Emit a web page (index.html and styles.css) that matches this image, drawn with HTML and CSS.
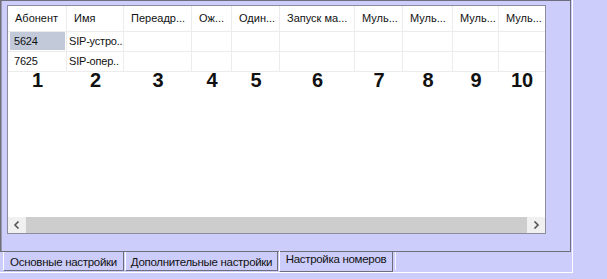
FILE: index.html
```
<!DOCTYPE html>
<html lang="ru">
<head>
    <meta charset="UTF-8">
    <title>Настройка номеров</title>
    <link rel="stylesheet" href="styles.css">
</head>
<body>
    <div class="frame">
        <div class="panel">
            <div class="list">
                <div class="row head">
                    <div class="cell">Абонент</div>
                    <div class="cell">Имя</div>
                    <div class="cell">Переадр...</div>
                    <div class="cell">Ож...</div>
                    <div class="cell">Один...</div>
                    <div class="cell">Запуск ма...</div>
                    <div class="cell">Муль...</div>
                    <div class="cell">Муль...</div>
                    <div class="cell">Муль...</div>
                    <div class="cell last">Муль...</div>
                </div>
                <div class="row item">
                    <div class="cell"><span class="sel">5624</span></div>
                    <div class="cell">SIP-устро..</div>
                    <div class="cell"></div>
                    <div class="cell"></div>
                    <div class="cell"></div>
                    <div class="cell"></div>
                    <div class="cell"></div>
                    <div class="cell"></div>
                    <div class="cell"></div>
                    <div class="cell last"></div>
                </div>
                <div class="row item">
                    <div class="cell"><span class="plain">7625</span></div>
                    <div class="cell">SIP-опер..</div>
                    <div class="cell"></div>
                    <div class="cell"></div>
                    <div class="cell"></div>
                    <div class="cell"></div>
                    <div class="cell"></div>
                    <div class="cell"></div>
                    <div class="cell"></div>
                    <div class="cell last"></div>
                </div>
                <div class="row nums">
                    <div>1</div>
                    <div>2</div>
                    <div>3</div>
                    <div>4</div>
                    <div>5</div>
                    <div>6</div>
                    <div>7</div>
                    <div>8</div>
                    <div>9</div>
                    <div>10</div>
                </div>
                <div class="spacer"></div>
                <div class="hscroll">
                    <div class="arrow">
                        <svg width="8" height="8" viewBox="0 0 8 8"><path d="M5.5 0.5 L2 4 L5.5 7.5" fill="none" stroke="#555" stroke-width="1.6"/></svg>
                    </div>
                    <div class="thumb"></div>
                    <div class="arrow">
                        <svg width="8" height="8" viewBox="0 0 8 8"><path d="M2.5 0.5 L6 4 L2.5 7.5" fill="none" stroke="#555" stroke-width="1.6"/></svg>
                    </div>
                </div>
            </div>
        </div>
        <div class="tabs">
            <div class="tab t1">Основные настройки</div>
            <div class="tab t2">Дополнительные настройки</div>
            <div class="tab t3 active">Настройка номеров</div>
            <div class="tab-rest"></div>
        </div>
    </div>
</body>
</html>
```

FILE: styles.css
```
body {
    margin: 0;
    padding: 0;
    background: #cdcdfb;
    font-family: 'Liberation Sans', Arial, sans-serif;
    width: 607px;
    height: 279px;
    overflow: hidden;
}
.frame {
    box-sizing: border-box;
    width: 573px;
    height: 273px;
    border-right: 1px solid #ffffff;
    border-bottom: 1px solid #ffffff;
    display: flex;
    flex-direction: column;
}
.panel {
    box-sizing: border-box;
    width: 571px;
    height: 252px;
    border: 1px solid #6f6f7c;
    box-shadow: inset 1px 0 #9a9aae;
    padding: 4px 0 0 6px;
}
.list {
    box-sizing: border-box;
    width: 539px;
    height: 229px;
    border: 1px solid #8c8c9c;
    background: #fff;
    display: flex;
    flex-direction: column;
}
.row {
    display: grid;
    grid-template-columns: 59px 57px 68px 40px 48px 75px 48px 50px 46px 46px;
}
.cell {
    box-sizing: border-box;
    border-right: 1px solid #ececec;
    font-size: 11px;
    color: #111;
    white-space: nowrap;
    overflow: hidden;
}
.cell.last {
    border-right: none;
}
.head {
    height: 25px;
    border-bottom: 1px solid #ececec;
}
.head .cell {
    line-height: 25px;
    padding-left: 7px;
}
.item {
    height: 19px;
    border-bottom: 1px solid #ececec;
}
.item .cell {
    line-height: 18px;
    padding-left: 2px;
    letter-spacing: -0.2px;
}
.item .cell:first-child {
    padding-left: 2px;
    padding-right: 1px;
}
.sel,
.plain {
    display: block;
    height: 18px;
    padding-left: 4px;
}
.sel {
    background: #c2cada;
}
.nums div {
    text-align: center;
    font-weight: bold;
    font-size: 20px;
    line-height: 20px;
    margin-top: -2px;
    color: #111;
}
.spacer {
    flex: 1;
}
.hscroll {
    height: 16px;
    display: flex;
    background: #f0f0f0;
}
.arrow {
    width: 18px;
    display: flex;
    align-items: center;
    justify-content: center;
}
.thumb {
    flex: 1;
    background: #cdcdcd;
}
.tabs {
    display: flex;
    height: 20px;
    padding-left: 3px;
    align-items: flex-start;
}
.tab {
    box-sizing: border-box;
    height: 19px;
    border-left: 1px solid #ffffff;
    border-right: 1px solid #6f6f7c;
    border-bottom: 1px solid #6f6f7c;
    font-size: 11.5px;
    line-height: 18px;
    padding-top: 1px;
    margin-right: 1px;
    color: #111;
    white-space: nowrap;
    text-align: center;
    letter-spacing: -0.3px;
}
.t1 {
    width: 121px;
}
.t2 {
    width: 153px;
}
.t3 {
    width: 114px;
}
.tab.active {
    height: 21px;
    margin-top: -1px;
    padding-top: 0;
    line-height: 16px;
}
.tab-rest {
    flex: 1;
    height: 18px;
    border-left: 1px solid #f4f4ff;
    margin-left: 1px;
}
```
